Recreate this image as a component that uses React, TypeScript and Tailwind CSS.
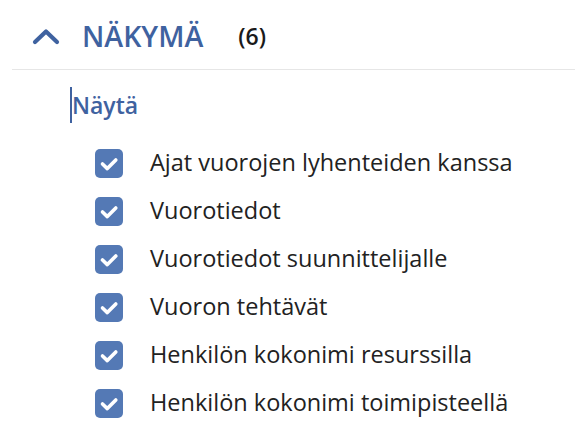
const items = [
  "Ajat vuorojen lyhenteiden kanssa",
  "Vuorotiedot",
  "Vuorotiedot suunnittelijalle",
  "Vuoron tehtävät",
  "Henkilön kokonimi resurssilla",
  "Henkilön kokonimi toimipisteellä",
];

function CheckBox() {
  return (
    <span className="block h-[29px] w-[28px] shrink-0 rounded-[5px] bg-[#5479b5]">
      <svg viewBox="0 0 28 29" className="h-[29px] w-[28px]" fill="none" stroke="white" strokeWidth="3.6" strokeLinecap="round" strokeLinejoin="round">
        <path d="M7.5 15l4.8 4.6 8.5-8.6" />
      </svg>
    </span>
  );
}

export default function App() {
  return (
    <div className="h-[444px] w-[575px] bg-white" style={{ fontFamily: '"Open Sans", "Noto Sans", sans-serif' }}>
      <div className="ml-[12px] flex h-[70px] items-center border-b border-[#e6e6e6] pl-[20px] pt-[4px]">
        <svg viewBox="0 0 28 17" className="h-[17px] w-[28px]" fill="none" stroke="#3f62a0" strokeWidth="4.2" strokeLinecap="round" strokeLinejoin="round">
          <path d="M3 14L14 3.5 25 14" />
        </svg>
        <span className="ml-[22px] text-[28.5px] font-semibold leading-none text-[#3f62a0]">NÄKYMÄ</span>
        <span className="ml-[35px] text-[23px] font-semibold leading-none text-[#1a1a1a]">(6)</span>
      </div>
      <div className="pl-[70px] pt-[17px]">
        <div className="flex items-center">
          <span className="h-[36px] w-[2px] bg-[#3f62a0]" />
          <span className="text-[23px] font-semibold text-[#3f62a0]">Näytä</span>
        </div>
      </div>
      <div className="mt-[16px] flex flex-col pl-[95px]">
        {items.map((t) => (
          <div key={t} className="flex h-[48px] items-center">
            <CheckBox />
            <span className="ml-[27px] text-[23.5px] text-[#222]">{t}</span>
          </div>
        ))}
      </div>
    </div>
  );
}
